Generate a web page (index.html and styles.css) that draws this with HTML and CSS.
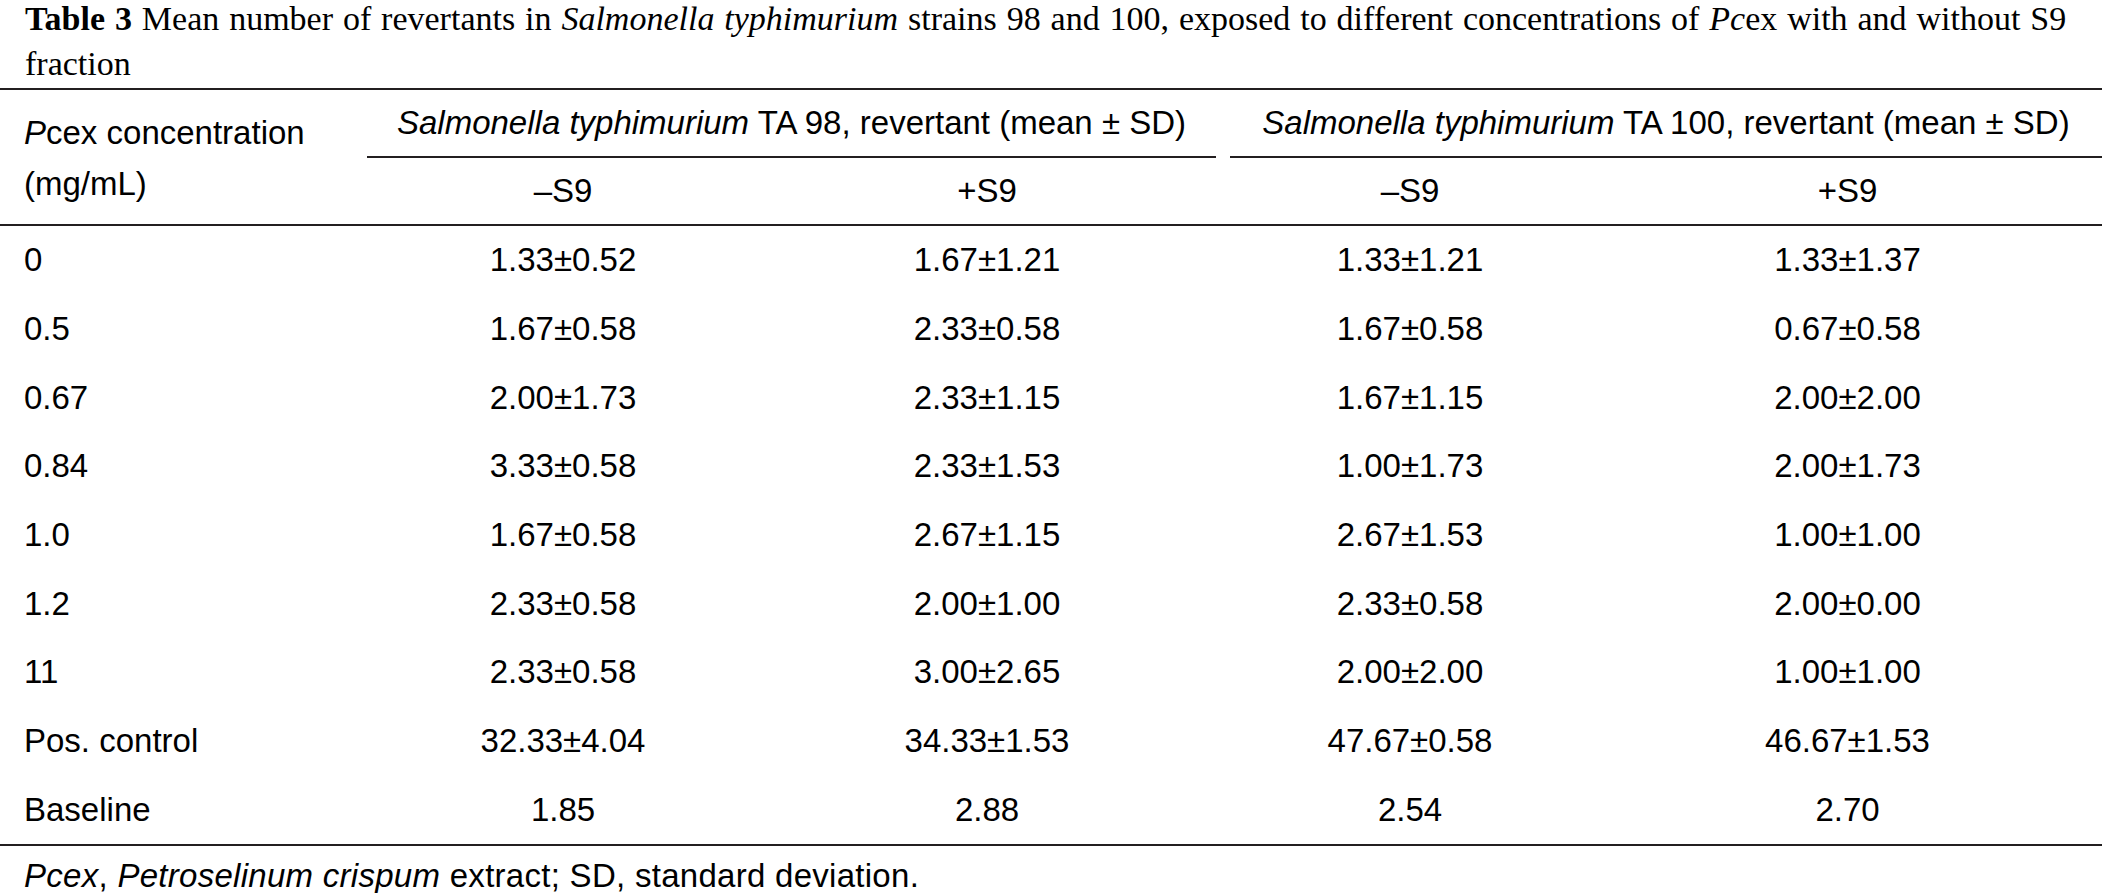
FILE: index.html
```html
<!DOCTYPE html>
<html lang="en">
<head>
<meta charset="utf-8">
<title>Table 3</title>
<link rel="stylesheet" href="styles.css">
</head>
<body>
<div class="page">
  <p class="caption"><b>Table 3</b> <span>Mean number of revertants in</span> <i>Salmonella typhimurium</i> <span>strains 98 and 100, exposed to different concentrations of</span> <i>Pc</i><span>ex with and without S9</span> <span>fraction</span></p>
  <div class="table">
    <div class="thead grid">
      <div class="stub">
        <span class="line"><i>P</i>cex concentration</span>
        <span class="line">(mg/mL)</span>
      </div>
      <div class="group g98"><span><i>Salmonella typhimurium</i> TA 98, revertant (mean ± SD)</span></div>
      <div class="group g100"><span><i>Salmonella typhimurium</i> TA 100, revertant (mean ± SD)</span></div>
      <div class="sub c2">–S9</div>
      <div class="sub c3">+S9</div>
      <div class="sub c4">–S9</div>
      <div class="sub c5">+S9</div>
    </div>
    <div class="tbody">
      <div class="row grid"><div class="c1">0</div><div class="c2">1.33±0.52</div><div class="c3">1.67±1.21</div><div class="c4">1.33±1.21</div><div class="c5">1.33±1.37</div></div>
      <div class="row grid"><div class="c1">0.5</div><div class="c2">1.67±0.58</div><div class="c3">2.33±0.58</div><div class="c4">1.67±0.58</div><div class="c5">0.67±0.58</div></div>
      <div class="row grid"><div class="c1">0.67</div><div class="c2">2.00±1.73</div><div class="c3">2.33±1.15</div><div class="c4">1.67±1.15</div><div class="c5">2.00±2.00</div></div>
      <div class="row grid"><div class="c1">0.84</div><div class="c2">3.33±0.58</div><div class="c3">2.33±1.53</div><div class="c4">1.00±1.73</div><div class="c5">2.00±1.73</div></div>
      <div class="row grid"><div class="c1">1.0</div><div class="c2">1.67±0.58</div><div class="c3">2.67±1.15</div><div class="c4">2.67±1.53</div><div class="c5">1.00±1.00</div></div>
      <div class="row grid"><div class="c1">1.2</div><div class="c2">2.33±0.58</div><div class="c3">2.00±1.00</div><div class="c4">2.33±0.58</div><div class="c5">2.00±0.00</div></div>
      <div class="row grid"><div class="c1">11</div><div class="c2">2.33±0.58</div><div class="c3">3.00±2.65</div><div class="c4">2.00±2.00</div><div class="c5">1.00±1.00</div></div>
      <div class="row grid"><div class="c1">Pos. control</div><div class="c2">32.33±4.04</div><div class="c3">34.33±1.53</div><div class="c4">47.67±0.58</div><div class="c5">46.67±1.53</div></div>
      <div class="row grid"><div class="c1">Baseline</div><div class="c2">1.85</div><div class="c3">2.88</div><div class="c4">2.54</div><div class="c5">2.70</div></div>
    </div>
  </div>
  <p class="note"><i>Pcex</i>, <i>Petroselinum crispum</i> extract; SD, standard deviation.</p>
</div>
</body>
</html>
```

FILE: styles.css
```css
html, body {
  margin: 0;
  padding: 0;
  background: #ffffff;
}

body {
  color: #000000;
  font-family: "Liberation Sans", Arial, sans-serif;
  font-size: 33px;
}

.page {
  width: 2102px;
  overflow: hidden;
}

.caption {
  margin: -4px 0 2px 0;
  padding: 0 27px 0 25px;
  font-family: "Liberation Serif", "Times New Roman", serif;
  font-size: 34px;
  line-height: 45px;
  word-spacing: 1.4px;
}

.caption b {
  font-weight: bold;
}

.table {
  border-top: 2px solid #231f20;
}

.grid {
  display: grid;
  grid-template-columns: 367px 392px 464px 374px 1fr;
}

.thead {
  grid-template-rows: 68px 66px;
  border-bottom: 2px solid #231f20;
}

.stub {
  grid-column: 1;
  grid-row: 1 / span 2;
  display: flex;
  flex-direction: column;
  padding: 17px 0 0 24px;
  line-height: 51px;
}

.group {
  grid-row: 1;
  display: flex;
  align-items: center;
  justify-content: center;
  border-bottom: 2px solid #231f20;
  white-space: nowrap;
}

.g98 {
  grid-column: 2 / span 2;
  margin-right: 7px;
}

.g100 {
  grid-column: 4 / span 2;
  margin-left: 7px;
}

.sub {
  grid-row: 2;
  display: flex;
  align-items: center;
  justify-content: center;
}

.sub.c2 { grid-column: 2; }
.sub.c3 { grid-column: 3; }
.sub.c4 { grid-column: 4; }
.sub.c5 { grid-column: 5; }

.tbody {
  border-bottom: 2px solid #231f20;
}

.row {
  height: 68.7px;
}

.row > div {
  display: flex;
  align-items: center;
  justify-content: center;
  white-space: nowrap;
}

.row > .c1 {
  justify-content: flex-start;
  padding-left: 24px;
}

.c3 {
  padding-right: 8px;
}

.c5 {
  padding-right: 4px;
}

.note {
  margin: 0;
  padding: 10px 0 0 24px;
  line-height: 40px;
  letter-spacing: 0.28px;
}
```
